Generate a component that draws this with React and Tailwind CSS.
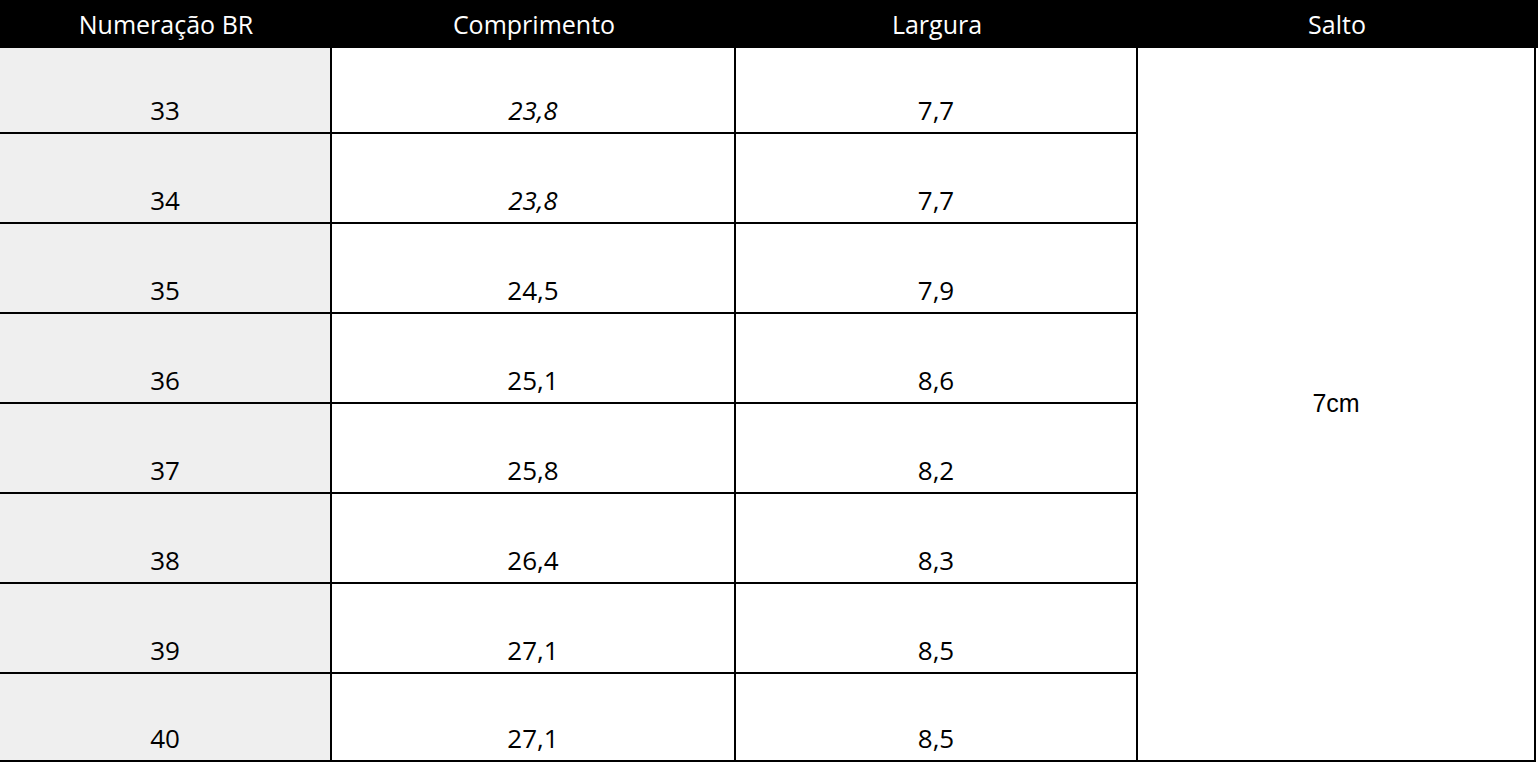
import React from 'react';

const rows = [
  { size: '33', length: '23,8', width: '7,7', italic: true },
  { size: '34', length: '23,8', width: '7,7', italic: true },
  { size: '35', length: '24,5', width: '7,9' },
  { size: '36', length: '25,1', width: '8,6' },
  { size: '37', length: '25,8', width: '8,2' },
  { size: '38', length: '26,4', width: '8,3' },
  { size: '39', length: '27,1', width: '8,5' },
  { size: '40', length: '27,1', width: '8,5' },
];

const rowHeight = (i) => {
  if (i === 0) return 'h-[86px]';
  if (i === rows.length - 1) return 'h-[88px]';
  return 'h-[90px]';
};

const cell = 'flex items-end justify-center pb-[9px] border-r-2 border-black leading-none';

const App = () => {
  return (
    <div className="w-[1538px] h-[762px] bg-white text-black overflow-hidden font-['Open_Sans',sans-serif] text-[26px]">
      <div className="flex h-[48px] bg-black text-white leading-none text-[25px]">
        <div className="w-[332px] flex items-center justify-center">Numeração BR</div>
        <div className="w-[404px] flex items-center justify-center">Comprimento</div>
        <div className="w-[402px] flex items-center justify-center">Largura</div>
        <div className="w-[398px] flex items-center justify-center">Salto</div>
      </div>

      <div className="flex h-[714px]">
        <div className="flex flex-col">
          {rows.map((r, i) => (
            <div key={r.size} className={`flex border-b-2 border-black ${rowHeight(i)}`}>
              <div className={`w-[332px] bg-[#efefef] ${cell}`}>{r.size}</div>
              <div className={`w-[404px] ${cell} ${r.italic ? 'italic' : ''}`}>{r.length}</div>
              <div className={`w-[402px] ${cell}`}>{r.width}</div>
            </div>
          ))}
        </div>
        <div className="w-[398px] border-r-2 border-b-2 border-black flex items-center justify-center font-['Liberation_Sans',Arial,sans-serif] text-[25px]">
          7cm
        </div>
      </div>
    </div>
  );
};

export default App;
